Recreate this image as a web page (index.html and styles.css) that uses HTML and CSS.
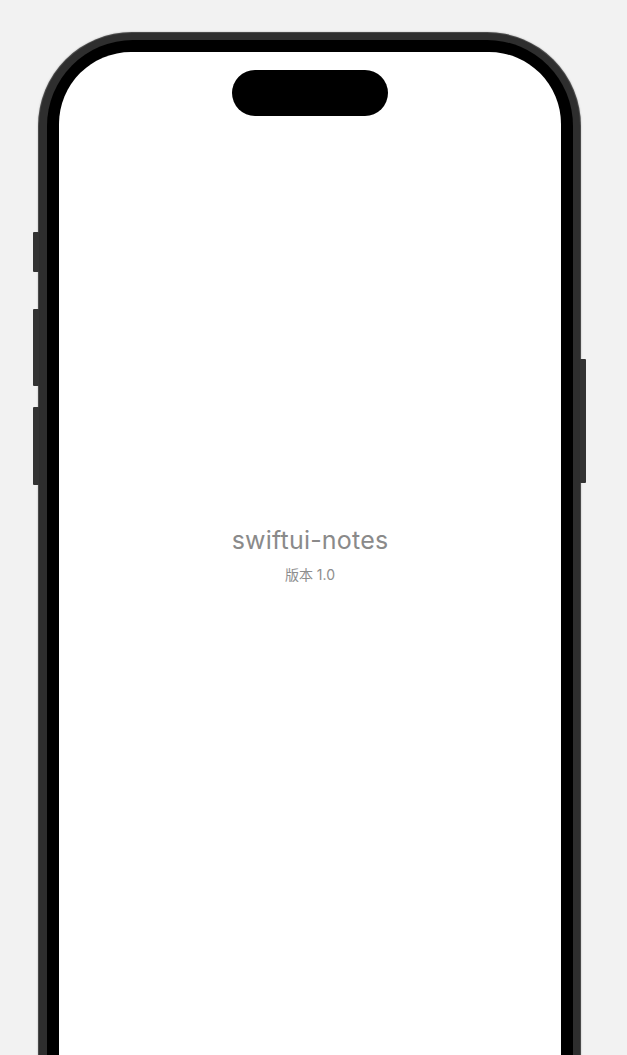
FILE: index.html
```html
<!DOCTYPE html>
<html lang="zh">
<head>
<meta charset="utf-8">
<title>swiftui-notes</title>
<link rel="stylesheet" href="styles.css">
</head>
<body>
<div class="stage">
  <div class="phone">
    <span class="btn btn-action"></span>
    <span class="btn btn-vol-up"></span>
    <span class="btn btn-vol-down"></span>
    <span class="btn btn-power"></span>
    <div class="bezel">
      <div class="screen">
        <div class="island"></div>
        <div class="content">
          <div class="title">swiftui-notes</div>
          <div class="version">版本 1.0</div>
        </div>
      </div>
    </div>
  </div>
</div>
</body>
</html>
```

FILE: styles.css
```css
html, body {
  margin: 0;
  padding: 0;
  background: #f2f2f2;
  height: 1055px;
  overflow: hidden;
}
.stage {
  padding: 33px 0 0 39px;
}
.phone {
  position: relative;
  width: 526px;
  height: 1120px;
  padding: 7px 7px 7px 8px;
  border-radius: 93px;
  background: #2e2e2e;
  box-shadow: 0 0 0 1px #4a4a4a, 0 0 2px 1px rgba(0,0,0,0.25);
}
.bezel {
  height: 100%;
  box-sizing: border-box;
  padding: 12px;
  border-radius: 86px;
  background: #000;
}
.screen {
  position: relative;
  height: 100%;
  border-radius: 72px;
  background: #fff;
  overflow: hidden;
}
.island {
  position: absolute;
  top: 18px;
  left: 173px;
  width: 156px;
  height: 46px;
  border-radius: 23px;
  background: #000;
}
.content {
  padding-top: 473px;
  display: flex;
  flex-direction: column;
  align-items: center;
  font-family: Inter, "Noto Sans CJK SC", sans-serif;
  color: #8a8a8a;
}
.title {
  font-size: 25px;
  line-height: 30px;
  letter-spacing: 0.2px;
}
.version {
  margin-top: 11px;
  font-size: 14px;
  line-height: 18px;
  color: #8e8e8e;
}
.btn {
  position: absolute;
  width: 6px;
  background: #333;
  border-radius: 1px;
}
.btn-action { left: -6px; top: 199px; height: 40px; }
.btn-vol-up { left: -6px; top: 276px; height: 77px; }
.btn-vol-down { left: -6px; top: 374px; height: 78px; }
.btn-power { right: -6px; top: 326px; height: 124px; }
```
